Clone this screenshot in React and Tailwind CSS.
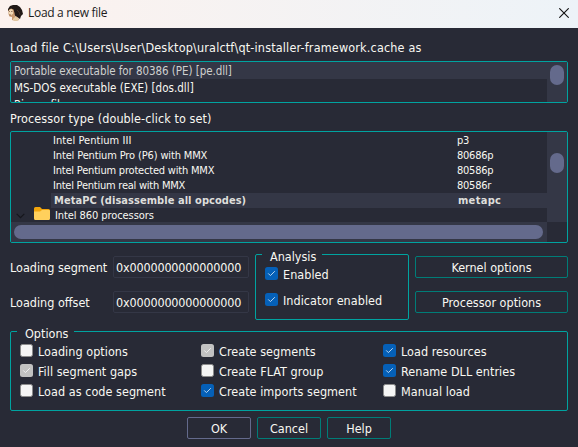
const processors = [
  ['Intel Pentium III', 'p3', 'tracking-[0.06px]'],
  ['Intel Pentium Pro (P6) with MMX', '80686p', 'tracking-[-0.14px]'],
  ['Intel Pentium protected with MMX', '80586p', 'tracking-[-0.2px]'],
  ['Intel Pentium real with MMX', '80586r', 'tracking-[-0.24px]'],
];

const options = [
  ['Loading options', 'off'],
  ['Create segments', 'disabled'],
  ['Load resources', 'on'],
  ['Fill segment gaps', 'disabled'],
  ['Create FLAT group', 'off'],
  ['Rename DLL entries', 'on'],
  ['Load as code segment', 'off'],
  ['Create imports segment', 'on'],
  ['Manual load', 'off'],
];

const boxColors = {
  on: 'bg-[#0560b8]',
  off: 'bg-[#f5f5f5] border border-[#8c8c8c]',
  disabled: 'bg-[#c2c2c2]',
};

function Check({ label, state }) {
  return (
    <div className="flex h-[13px] items-center gap-[5px] whitespace-nowrap tracking-[0.04px]">
      <span className={`flex size-[13px] shrink-0 items-center justify-center rounded-[2.5px] ${boxColors[state]}`}>
        {state !== 'off' && (
          <svg width="9" height="7" viewBox="0 0 9 7" fill="none" stroke={state === 'on' ? '#b9d5f0' : '#f0f0f0'}>
            <path d="M1.2 3.4 3.4 5.6 7.8 1.2" />
          </svg>
        )}
      </span>
      <span className="relative top-px">{label}</span>
    </div>
  );
}

function Button({ children, className }) {
  return (
    <button className={`flex h-[22px] items-center justify-center rounded-[2px] border pt-px ${className}`}>
      {children}
    </button>
  );
}

function Portrait() {
  return (
    <svg className="-mt-[2px] ml-[7px] shrink-0" width="16" height="16" viewBox="0 0 16 16">
      <path d="M1 4 3 1 6 0 10 0 13 2 15 5 16 9 14 11 13 14 10 12 7 10 3 6 1 6Z" fill="#211916" />
      <path d="M1.5 5 4 3.5 6.5 4.5 7.5 8 8 11 11 12.5 12 15 9 16 5 15 5 12 2.5 11.5 1.5 9Z" fill="#c99b70" />
      <path d="M2 5 4.5 4 6 5.5 6 8.5 4 10.5 2 8.5Z" fill="#f1d9b5" />
      <path d="M2 6.5h1M4 6.5h1.5M2.5 10h1.5" stroke="#76533e" strokeWidth=".7" />
      <path d="M6 14 8.5 11.5 11 13 11.5 15 9 16 6 15Z" fill="#e5cda5" />
      <path d="M10 5 12 7 13 10" stroke="#4b3629" strokeWidth=".8" fill="none" />
    </svg>
  );
}

function Folder() {
  return (
    <svg width="16" height="13" viewBox="0 0 16 13">
      <path d="M0 1.5Q0 0 1.5 0H6L8 2H14.5Q16 2 16 3.5V6H0Z" fill="#f2a50c" />
      <path d="M0 4.5H6L8 3H15Q16 3 16 4V11.5Q16 13 14.5 13H1.5Q0 13 0 11.5Z" fill="#ffd05c" />
    </svg>
  );
}

export default function App() {
  return (
    <div className="h-[447px] w-[578px] overflow-hidden bg-[#282a36] font-['DejaVu_Sans_Condensed','DejaVu_Sans',sans-serif] text-[12.5px] leading-[16px] font-normal text-[#f8f8f2] [font-stretch:condensed]">
      <header className="flex h-7 items-center bg-linear-to-r from-[#fcf2ee] to-[#edf3f8] font-['Open_Sans',sans-serif] text-[12px] text-[#1c1c1c] [font-stretch:normal]">
        <Portrait />
        <span className="-mt-[2px] ml-[5px] tracking-[-0.3px]">Load a new file</span>
        <svg className="-mt-[3px] mr-[9px] ml-auto" width="10" height="10" viewBox="0 0 10 10" stroke="#111" strokeWidth="1.1">
          <path d="M.3.3 9.7 9.7M9.7.3.3 9.7" />
        </svg>
      </header>

      <main className="px-[10px]">
        <div className="flex h-[33px] items-center pt-[7px] tracking-[0.17px] whitespace-nowrap">
          Load file C:\Users\User\Desktop\uralctf\qt-installer-framework.cache as
        </div>

        <div className="flex h-[42px] overflow-hidden rounded-[2px] border border-[#00a3a0] text-[11.5px] leading-[19px]">
          <div className="flex-1 whitespace-nowrap">
            <div className="h-[17px] bg-[#343746] pl-[3px] tracking-[-0.06px] text-[#cfd0cf]">Portable executable for 80386 (PE) [pe.dll]</div>
            <div className="h-[17px] pl-[3px] tracking-[0.03px]">MS-DOS executable (EXE) [dos.dll]</div>
            <div className="h-[17px] pl-[3px]">Binary file</div>
          </div>
          <div className="w-5 bg-[#343746] pt-[3px] pl-[3px]">
            <div className="h-5 w-[14px] rounded-full bg-[#646a8c]" />
          </div>
        </div>

        <div className="flex h-7 items-center pt-[3px] tracking-[0.09px]">Processor type (double-click to set)</div>

        <div className="h-[112px] overflow-hidden rounded-[2px] border border-[#00a3a0] text-[11px] leading-[15px]">
          <div className="flex h-[90px]">
            <div className="flex-1 whitespace-nowrap pt-px">
              {processors.map(([name, id, tracking]) => (
                <div key={id} className="flex h-[15px] pl-[42px]">
                  <span className={`w-[404px] ${tracking}`}>{name}</span>
                  <span className="tracking-[-0.25px]">{id}</span>
                </div>
              ))}
              <div className="ml-10 flex h-[15px] bg-[#343746] pl-[3px] font-bold tracking-[0.05px] text-[#dededb]">
                <span className="w-[404px]">MetaPC (disassemble all opcodes)</span>
                <span className="tracking-[0.3px]">metapc</span>
              </div>
              <div className="flex h-[15px] items-center">
                <svg className="mx-[5px]" width="9" height="6" viewBox="0 0 9 6" fill="none" stroke="#15161c" strokeWidth="1.2">
                  <path d="M.7.8 4.5 4.7 8.3.8" />
                </svg>
                <span className="-mt-[5px] ml-1"><Folder /></span>
                <span className="ml-[5px] tracking-[-0.08px]">Intel 860 processors</span>
              </div>
            </div>
            <div className="w-5 bg-[#343746] pt-[21px] pl-[3px]">
              <div className="h-5 w-[14px] rounded-full bg-[#646a8c]" />
            </div>
          </div>
          <div className="mr-5 h-5 bg-[#343746] pt-[3px] pl-[3px]">
            <div className="h-[14px] w-[529px] rounded-full bg-[#646a8c]" />
          </div>
        </div>

        <div className="mt-[11px] flex h-[66px]">
          <div className="mt-[2px] flex w-[245px] flex-col gap-[13px]">
            {['segment', 'offset'].map((name) => (
              <div key={name} className="flex h-[22px] items-center">
                <span className="w-[103px] whitespace-nowrap pt-px">Loading {name}</span>
                <div className="flex h-[22px] w-[136px] items-center rounded-[2px] border border-[#343746] pt-px pl-[2px] tracking-[-0.17px]">
                  0x0000000000000000
                </div>
              </div>
            ))}
          </div>

          <section className="w-[154px] rounded-[2px] border border-[#00a3a0] pl-[9px]">
            <h2 className="-mt-[6px] -ml-[3px] h-[18px] w-[60px] bg-[#282a36] pl-2">Analysis</h2>
            <div className="flex flex-col gap-[13px]">
              <Check label="Enabled" state="on" />
              <Check label="Indicator enabled" state="on" />
            </div>
          </section>

          <div className="mt-[2px] ml-[6px] flex flex-1 flex-col gap-[13px]">
            <Button className="w-full border-[#007d78]">Kernel options</Button>
            <Button className="w-full border-[#007d78]">Processor options</Button>
          </div>
        </div>

        <section className="mt-[11px] h-[80px] rounded-[2px] border border-[#00a3a0] pl-[9px]">
          <h2 className="-mt-[6px] -ml-[3px] h-[18px] w-[57px] bg-[#282a36] pl-2">Options</h2>
          <div className="grid grid-cols-[181px_182px_1fr] gap-y-[7px]">
            {options.map(([label, state]) => (
              <Check key={label} label={label} state={state} />
            ))}
          </div>
        </section>

        <footer className="mt-[6px] flex justify-center gap-[6px]">
          <Button className="w-16 border-[#646a8c]">OK</Button>
          <Button className="w-16 border-[#007d78]">Cancel</Button>
          <Button className="w-16 border-[#007d78]">Help</Button>
        </footer>
      </main>
    </div>
  );
}
